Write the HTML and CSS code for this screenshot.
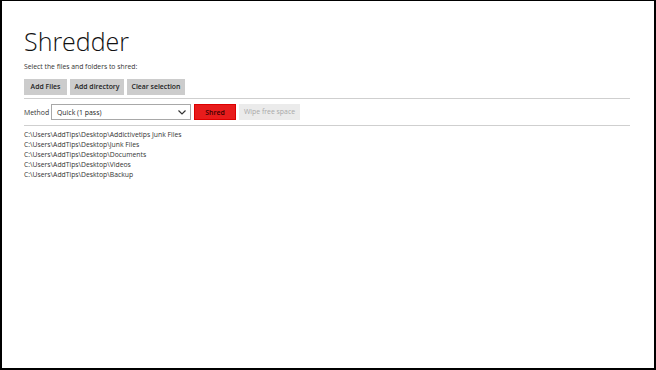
FILE: index.html
```html
<!DOCTYPE html>
<html>
<head>
<meta charset="utf-8">
<link rel="stylesheet" href="styles.css">
</head>
<body>
<div class="frame">
  <div class="page">
    <h1 class="title">Shredder</h1>
    <p class="hint">Select the files and folders to shred:</p>
    <div class="toolbar">
      <button class="btn w-add">Add Files</button>
      <button class="btn w-dir">Add directory</button>
      <button class="btn w-clear">Clear selection</button>
    </div>
    <div class="rule"></div>
    <div class="method-row">
      <span class="label">Method</span>
      <div class="select">
        <span>Quick (1 pass)</span>
        <svg class="chev" width="8" height="5" viewBox="0 0 8 5"><path d="M0.5 0.5 L4 4 L7.5 0.5" fill="none" stroke="#333" stroke-width="1.2"/></svg>
      </div>
      <button class="btn btn-red">Shred</button>
      <button class="btn btn-disabled">Wipe free space</button>
    </div>
    <div class="rule"></div>
    <ul class="files">
      <li>C:\Users\AddTips\Desktop\Addictivetips Junk Files</li>
      <li>C:\Users\AddTips\Desktop\Junk Files</li>
      <li>C:\Users\AddTips\Desktop\Documents</li>
      <li>C:\Users\AddTips\Desktop\Videos</li>
      <li>C:\Users\AddTips\Desktop\Backup</li>
    </ul>
  </div>
</div>
</body>
</html>
```
FILE: styles.css
```css
html, body {
  margin: 0;
  padding: 0;
  background: #fff;
}
.frame {
  box-sizing: border-box;
  width: 656px;
  height: 370px;
  border-top: 1px solid #000;
  border-left: 2px solid #000;
  border-right: 2px solid #000;
  border-bottom: 2px solid #000;
  font-family: "Open Sans", "Noto Sans", sans-serif;
  color: #222;
}
.page {
  padding: 0 24px 0 22px;
}
.title {
  margin: 0;
  padding-top: 23px;
  font-weight: 300;
  font-size: 25px;
  line-height: 35px;
  color: #111;
}
.hint {
  margin: 3px 0 0;
  font-size: 6.8px;
  line-height: 10px;
  color: #333;
}
.toolbar {
  display: flex;
  gap: 3px;
  margin-top: 7px;
}
.btn {
  border: none;
  margin: 0;
  height: 16px;
  padding: 0;
  background: #cccccc;
  color: #222;
  font-family: "Open Sans", "Noto Sans", sans-serif;
  font-weight: 600;
  font-size: 6.9px;
  line-height: 16px;
  text-align: center;
  white-space: nowrap;
}
.w-add { width: 43px; }
.w-dir { width: 54px; }
.w-clear { width: 58px; }
.rule {
  height: 1px;
  background: #cfcfcf;
  margin-top: 3px;
}
.method-row {
  display: flex;
  align-items: center;
  gap: 3px;
  margin-top: 5px;
}
.label {
  font-size: 6.9px;
  color: #333;
  width: 24px;
}
.select {
  box-sizing: border-box;
  width: 140px;
  height: 16px;
  border: 1px solid #a8a8a8;
  background: #fff;
  display: flex;
  align-items: center;
  justify-content: space-between;
  padding: 0 4px 0 5px;
  font-size: 6.9px;
  color: #222;
}
.chev {
  display: block;
}
.btn-red {
  width: 42px;
  background: #e81c1c;
  color: #3a0000;
  border: 1px solid #d00;
  box-sizing: border-box;
}
.btn-disabled {
  width: 61px;
  background: #ebebeb;
  color: #a8a8a8;
  font-weight: 400;
}
.method-row + .rule {
  margin-top: 5px;
}
.files {
  list-style: none;
  margin: 4px 0 0;
  padding: 0;
  font-size: 6.8px;
  line-height: 10px;
  color: #333;
}
```
